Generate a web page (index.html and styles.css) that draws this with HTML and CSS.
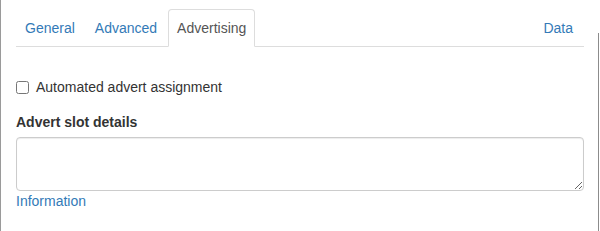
FILE: index.html
```html
<!DOCTYPE html>
<html lang="en">
<head>
    <meta charset="UTF-8">
    <title>Advertising settings</title>
    <link rel="stylesheet" href="styles.css">
</head>
<body>
    <div class="page">
        <ul class="nav_tabs">
            <li><a href="#">General</a></li>
            <li><a href="#">Advanced</a></li>
            <li class="active"><a href="#">Advertising</a></li>
            <li class="right"><a href="#">Data</a></li>
        </ul>

        <div class="tab_content">
            <label class="check_row">
                <input type="checkbox">
                <span>Automated advert assignment</span>
            </label>

            <div class="form_group">
                <label class="field_label" for="slot_details">Advert slot details</label>
                <textarea id="slot_details" class="field"></textarea>
                <a href="#" class="help_link">Information</a>
            </div>
        </div>
    </div>
</body>
</html>
```

FILE: styles.css
```css
html, body {
    margin: 0;
    height: 100%;
}
body {
    font-family: "Liberation Sans", Arial, sans-serif;
    font-size: 14px;
    line-height: 20px;
    color: #333;
    background: #fff linear-gradient(#8c8c8c, #8c8c8c) no-repeat 598px 33px / 1px 198px;
}
.page {
    box-sizing: border-box;
    min-height: 231px;
    border-left: 1px solid #9a9a9a;
    padding: 9px 16px 0 15px;
}
a {
    color: #337ab7;
    text-decoration: none;
}
.nav_tabs {
    list-style: none;
    margin: 0;
    padding: 0;
    display: flex;
    border-bottom: 1px solid #ddd;
}
.nav_tabs li {
    margin: 0 2px -1px 0;
}
.nav_tabs li.right {
    margin-left: auto;
}
.nav_tabs a {
    display: block;
    padding: 8px 8px 8px;
    border: 1px solid transparent;
    border-radius: 4px 4px 0 0;
}
.nav_tabs li.active a {
    color: #555;
    background: #fff;
    border-color: #ddd #ddd transparent;
}
.tab_content {
    padding-top: 30px;
}
.check_row {
    display: flex;
    align-items: center;
    gap: 7px;
    margin-bottom: 15px;
}
.check_row input {
    margin: 0;
    width: 13px;
    height: 13px;
}
.field_label {
    display: block;
    font-weight: bold;
    margin-bottom: 5px;
}
.field {
    display: block;
    box-sizing: border-box;
    width: 100%;
    height: 54px;
    border: 1px solid #ccc;
    border-radius: 4px;
    box-shadow: inset 0 1px 1px rgba(0, 0, 0, .075);
    font: inherit;
    padding: 6px 12px;
}
.help_link {
    display: inline-block;
}
```
